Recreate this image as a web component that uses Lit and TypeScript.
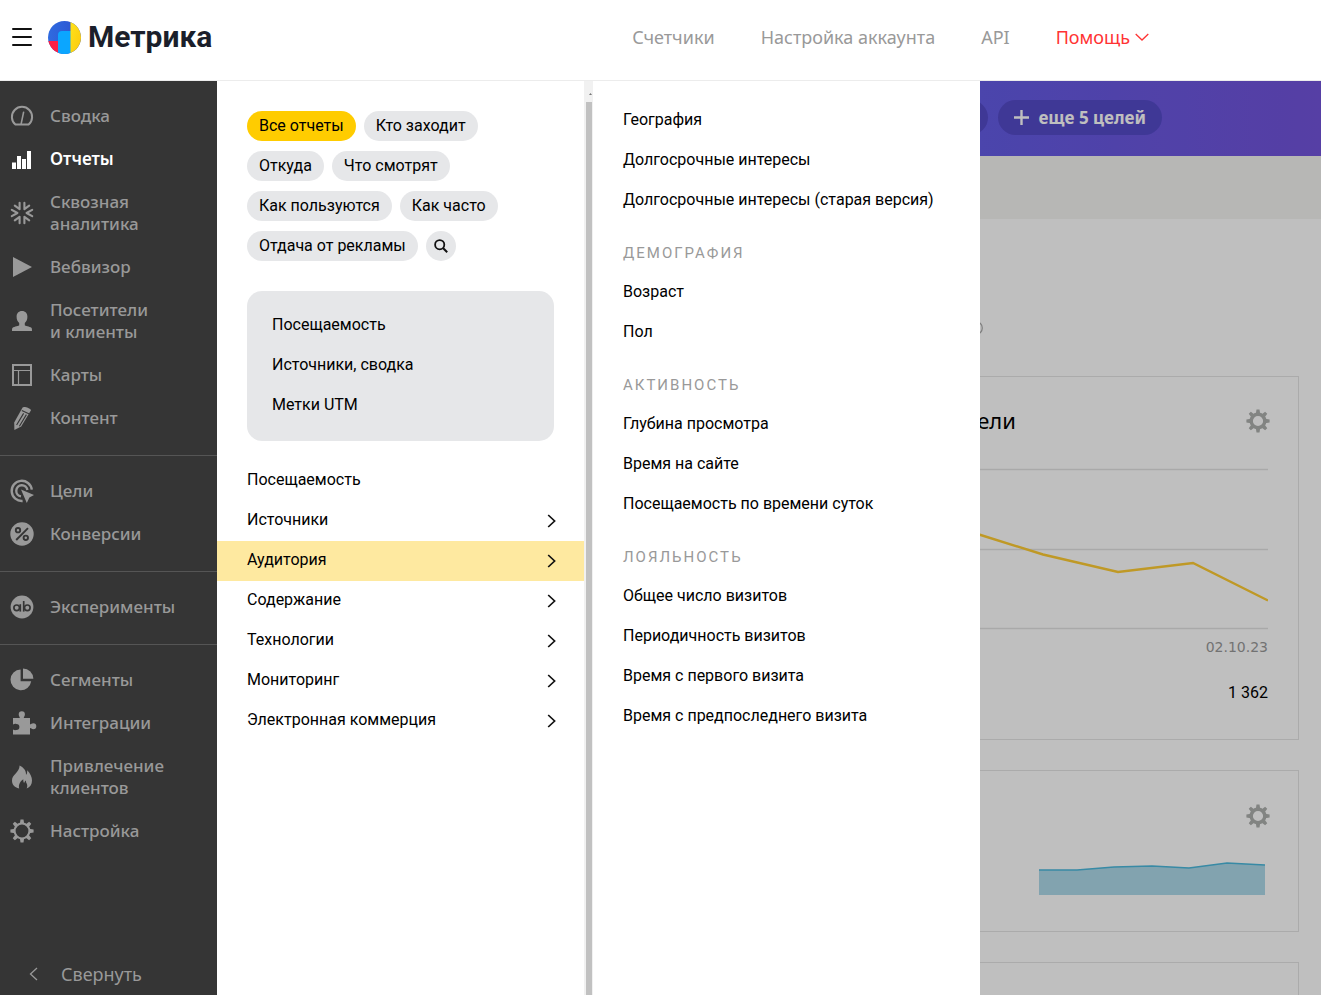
import { LitElement, html, css, svg, nothing, SVGTemplateResult } from "lit";
import { customElement, state } from "lit/decorators.js";
import { classMap } from "lit/directives/class-map.js";

type Icon = SVGTemplateResult;

const gear = (inner: number, tooth: number): Icon => svg`
  <circle cx="12" cy="12" r=${inner} fill="none" stroke="currentColor" stroke-width=${tooth} />
  ${[0, 45, 90, 135, 180, 225, 270, 315].map(
    (a) => svg`<path transform="rotate(${a} 12 12)" d="M9.800 4.900 10.500 .4h3L14.200 4.900z" fill="currentColor" />`
  )}`;

const icons: Record<string, Icon> = {
  summary: svg`<path d="M5.400 20.600A10.100 10.100 0 1 1 18.600 20.600z" fill="none" stroke="currentColor" stroke-width="2" stroke-linejoin="round" /><path d="M13.600 8.200 11.200 19.600" stroke="currentColor" stroke-width="1.600" stroke-linecap="round" />`,
  reports: svg`<path d="M2 15.500h4V22H2zM7 9h4v13H7zM12 12h4v10h-4zM17 4h4v18h-4z" fill="currentColor" />`,
  through: svg`<g fill="none" stroke="currentColor" stroke-width="2.100" stroke-linecap="round" stroke-linejoin="round">
    <path d="M1.800 8.800 7.400 12 1.800 15.200M22.200 8.800 16.600 12 22.200 15.200" />
    <path d="M9.600 1.800V8.200L4.800 4.600M14.400 1.800V8.200L19.200 4.600M9.600 22.200V15.800L4.800 19.400M14.400 22.200V15.800L19.200 19.400" />
  </g>`,
  play: svg`<path d="M3 2v20l19-10z" fill="currentColor" />`,
  person: svg`<path d="M12 2c3.400 0 5.400 2.200 5.400 5.800 0 2.700-1 4.900-2.600 6.200v2.200c0 .8 5 1.200 6.600 2.600.5.500.6 1.200.6 3.200H2c0-2 .1-2.700.6-3.200C4.200 17.400 9.200 17 9.200 16.200V14C7.600 12.700 6.600 10.500 6.600 7.800 6.600 4.200 8.600 2 12 2z" fill="currentColor" />`,
  maps: svg`<path d="M3 2h18v20H3z" fill="none" stroke="currentColor" stroke-width="2" /><path d="M3 7.500h18M8.500 7.500V22" stroke="currentColor" stroke-width="1.200" />`,
  pencil: svg`<path d="M12.600 1.600c1-1.600 7.600.6 8.400 2.600L11.200 20.600 4.400 24 4.200 16.600z" fill="currentColor" /><path d="M11.800 4.600 19.400 8M13.600 7.400 6.600 19M16.400 8.600 9.400 20.200" stroke="#353535" stroke-width="1.100" />`,
  goals: svg`<path d="M21.800 10.600A10.100 10.100 0 1 0 12.600 22M17.400 11A5.600 5.600 0 1 0 11 17.400" fill="none" stroke="currentColor" stroke-width="2.400" /><path d="M11 10.400 24 16l-4.600 2.400-2.600 5.600z" fill="currentColor" />`,
  percent: svg`<circle cx="12" cy="12" r="11.700" fill="currentColor" /><g fill="none" stroke="#353535" stroke-width="1.900"><circle cx="8" cy="8.200" r="2.200" /><circle cx="15.800" cy="15.800" r="2.200" /><path d="M18 6.200 6.200 18" /></g>`,
  ab: svg`<circle cx="12" cy="12" r="11.400" fill="currentColor" /><g fill="none" stroke="#353535" stroke-width="1.700"><circle cx="6.700" cy="12.800" r="2.800" /><path d="M10.300 9.200v7.400" /><circle cx="17.300" cy="12.800" r="2.800" /><path d="M13.700 6v10.600" /></g>`,
  segments: svg`<path d="M10.600 1.400v11.800h10.600A10.400 10.400 0 1 1 10.600 1.400z" fill="currentColor" /><path d="M13 .6A10.400 10.400 0 0 1 23.400 10.800H13z" fill="currentColor" />`,
  puzzle: svg`<path d="M3 7h6.700c.6-.8-1-1.500-1-3.600a3.100 3.100 0 0 1 6.200 0c0 2.100-1.600 2.800-1 3.600H20v6.200c.8.500 1.400-1 3.300-1a3 3 0 0 1 0 6c-1.900 0-2.500-1.500-3.300-1V23.500H3V18.400c1 .6 2 1 3.400.6a3 3 0 0 0 0-6c-1.400-.4-2.400 0-3.400.6z" fill="currentColor" />`,
  fire: svg`<path d="M9.600.6c5 2.800 6.600 5.600 6.400 9.200.9-.7 1.300-2.200 1.200-4.600 3.300 3.300 4.800 7 4.800 10.400 0 4-1.800 6.600-5.400 8 .9-1.800.9-3.400.1-5-.7-1.300-.8-1.800-.7-3-1.100.7-1.600 1.500-1.800 2.600-.9-1.300-1-2.600-.9-3.900-2.600 1.700-5.200 5.200-4.100 9.300C4.200 22.200 2 19.600 2 15.600 2 9.400 9.400 7.800 9.600.6z" fill="currentColor" />`,
  settings: svg`${gear(7.400, 2)}`,
};

interface NavItem { icon: string; label: string[]; active?: boolean }

const NAV: NavItem[][] = [
  [
    { icon: "summary", label: ["Сводка"] },
    { icon: "reports", label: ["Отчеты"], active: true },
    { icon: "through", label: ["Сквозная", "аналитика"] },
    { icon: "play", label: ["Вебвизор"] },
    { icon: "person", label: ["Посетители", "и клиенты"] },
    { icon: "maps", label: ["Карты"] },
    { icon: "pencil", label: ["Контент"] },
  ],
  [
    { icon: "goals", label: ["Цели"] },
    { icon: "percent", label: ["Конверсии"] },
  ],
  [{ icon: "ab", label: ["Эксперименты"] }],
  [
    { icon: "segments", label: ["Сегменты"] },
    { icon: "puzzle", label: ["Интеграции"] },
    { icon: "fire", label: ["Привлечение", "клиентов"] },
    { icon: "settings", label: ["Настройка"] },
  ],
];

const FILTERS = ["Все отчеты", "Кто заходит", "Откуда", "Что смотрят", "Как пользуются", "Как часто", "Отдача от рекламы"];
const FAVORITES = ["Посещаемость", "Источники, сводка", "Метки UTM"];
const CATEGORIES = ["Посещаемость", "Источники", "Аудитория", "Содержание", "Технологии", "Мониторинг", "Электронная коммерция"];

const REPORTS: { title?: string; items: string[] }[] = [
  { items: ["География", "Долгосрочные интересы", "Долгосрочные интересы (старая версия)"] },
  { title: "Демография", items: ["Возраст", "Пол"] },
  { title: "Активность", items: ["Глубина просмотра", "Время на сайте", "Посещаемость по времени суток"] },
  { title: "Лояльность", items: ["Общее число визитов", "Периодичность визитов", "Время с первого визита", "Время с предпоследнего визита"] },
];

@customElement("metrika-header")
class MetrikaHeader extends LitElement {
  static styles = css`
    :host { display: block; }
    .bar { display: flex; align-items: center; height: 74px; padding: 0 172px 6px 12px; background: #fff; border-bottom: 1px solid #ececec; }
    .burger { display: grid; gap: 6px; width: 20px; padding: 0; border: 0; background: none; }
    .burger i { height: 2px; border-radius: 1px; background: #111; }
    .logo { display: flex; align-items: center; gap: 7px; margin-left: 16px; color: #1b1f2b; font: 700 30px/40px Roboto, sans-serif; text-decoration: none; }
    .logo svg { width: 33px; height: 33px; }
    nav { display: flex; gap: 46px; margin-left: auto; }
    nav a { display: flex; align-items: center; gap: 5px; color: #999; font-size: 18px; line-height: 24px; text-decoration: none; }
    nav a.help { color: #f33; }
    nav svg { width: 14px; height: 8px; }
  `;
  render() {
    return html`
      <header class="bar">
        <button class="burger" aria-label="Меню"><i></i><i></i><i></i></button>
        <a class="logo" href="#">
          <svg viewBox="0 0 33 33" aria-hidden="true">
            <defs>
              <clipPath id="disc"><circle cx="16.500" cy="16.500" r="16.500" /></clipPath>
              <linearGradient id="sun" x1="0" y1="0" x2="1" y2="1"><stop offset="0" stop-color="#ffe21a" /><stop offset="1" stop-color="#fbc80c" /></linearGradient>
              <linearGradient id="sea" x1="0" y1="0" x2="1" y2="0"><stop offset="0" stop-color="#2f6be0" /><stop offset="1" stop-color="#2c50cf" /></linearGradient>
            </defs>
            <g clip-path="url(#disc)">
              <rect width="33" height="33" fill="url(#sea)" />
              <rect y="20" width="12" height="13" fill="#fb1f45" />
              <path d="M10 33V14a4 4 0 0 1 4-4h9v23z" fill="#0ba6ff" />
              <rect x="22.500" width="11" height="33" fill="url(#sun)" />
            </g>
          </svg>
          <span>Метрика</span>
        </a>
        <nav>
          <a href="#">Счетчики</a>
          <a href="#">Настройка аккаунта</a>
          <a href="#">API</a>
          <a href="#" class="help">Помощь
            <svg viewBox="0 0 14 8" aria-hidden="true"><path d="M.7 1 7 7l6.300-6" fill="none" stroke="currentColor" stroke-width="1.300" /></svg>
          </a>
        </nav>
      </header>`;
  }
}

@customElement("metrika-sidebar")
class MetrikaSidebar extends LitElement {
  static styles = css`
    :host { display: flex; flex-direction: column; background: #353535; }
    ul { list-style: none; margin: 0; padding: 14px 0 15px; border-bottom: 1px solid #555; }
    ul:last-of-type { border-bottom: 0; }
    a { display: flex; align-items: center; gap: 16px; padding: 10px 10px 11px; color: #999; font-size: 17px; font-weight: 500; line-height: 22px; text-decoration: none; }
    a svg { flex: none; width: 24px; height: 24px; margin: -1px 0; overflow: visible; }
    a.active { color: #fff; font-weight: 600; }
    span { display: block; }
    .collapse { display: flex; align-items: center; gap: 23px; margin-top: auto; padding: 0 29px 9px; border: 0; background: none; color: #999; font: 400 18px/24px "Noto Sans", sans-serif; }
    .collapse svg { width: 9px; height: 14px; }
  `;
  render() {
    return html`
      ${NAV.map((group) => html`<ul>${group.map((item) => html`
        <li><a href="#" class=${classMap({ active: !!item.active })}>
          <svg viewBox="0 0 24 24" aria-hidden="true">${icons[item.icon]}</svg>
          <div>${item.label.map((line) => html`<span>${line}</span>`)}</div>
        </a></li>`)}</ul>`)}
      <button class="collapse">
        <svg viewBox="0 0 9 14" aria-hidden="true"><path d="M8 1 1.500 7 8 13" fill="none" stroke="currentColor" stroke-width="1.300" /></svg>
        <span>Свернуть</span>
      </button>`;
  }
}

@customElement("reports-menu")
class ReportsMenu extends LitElement {
  @state() private filter = FILTERS[0];
  @state() private category = "Аудитория";

  static styles = css`
    :host { display: flex; background: #fff; color: #000; font: 400 16px/20px Roboto, "Noto Sans", sans-serif; }
    button { font: inherit; color: inherit; border: 0; margin: 0; cursor: pointer; }
    .left { flex: none; width: 367px; box-sizing: border-box; padding-top: 30px; }
    .filters { display: flex; flex-wrap: wrap; gap: 10px 8px; padding: 0 30px; }
    .chip { height: 30px; padding: 0 12px 1px; border-radius: 15px; background: #e6e7e9; white-space: nowrap; }
    .chip.on { background: #fc0; }
    .search { display: grid; place-items: center; width: 30px; padding: 0; }
    .search svg { width: 14px; height: 14px; }
    ul { list-style: none; margin: 0; padding: 0; }
    .favorites { margin: 30px 30px 20px; padding: 15px 25px; border-radius: 15px; background: #e6e7e9; }
    a { display: block; padding: 9px 0 11px; color: inherit; text-decoration: none; }
    .row { display: flex; justify-content: space-between; align-items: center; width: 100%; height: 40px; padding: 0 28px 0 30px; background: none; text-align: left; }
    .row span { padding-bottom: 2px; }
    .row.on { background: #fee9a0; }
    .row svg { width: 9px; height: 14px; }
    .scroll { flex: none; display: flex; flex-direction: column; width: 9px; background: #f1f1f1; }
    .arrow { height: 21px; box-sizing: border-box; padding: 12px 0 0 5px; }
    .arrow svg { display: block; width: 3px; height: 2px; }
    .thumb { flex: 1; margin: 0 1px 0 2px; background: #c1c1c1; }
    .right { flex: 1; padding: 20px 30px; }
    h3 { margin: 12px 0 0; padding: 10px 0; color: #999; font-size: 15px; font-weight: 400; line-height: 20px; letter-spacing: 2px; text-transform: uppercase; }
  `;
  render() {
    return html`
      <section class="left">
        <div class="filters">
          ${FILTERS.map((f) => html`<button class=${classMap({ chip: true, on: f === this.filter })} @click=${() => (this.filter = f)}>${f}</button>`)}
          <button class="chip search" aria-label="Поиск">
            <svg viewBox="0 0 14 14" aria-hidden="true"><circle cx="5.700" cy="5.700" r="4.600" fill="none" stroke="#111" stroke-width="1.800" /><path d="m9 9 4.200 4.200" stroke="#111" stroke-width="2" /></svg>
          </button>
        </div>
        <ul class="favorites">${FAVORITES.map((t) => html`<li><a href="#">${t}</a></li>`)}</ul>
        <ul>${CATEGORIES.map((t, i) => html`<li>
          <button class=${classMap({ row: true, on: t === this.category })} @click=${() => (this.category = t)}>
            <span>${t}</span>
            ${i ? html`<svg viewBox="0 0 9 14" aria-hidden="true"><path d="M1.200 1 7.600 7 1.200 13" fill="none" stroke="#111" stroke-width="1.700" /></svg>` : nothing}
          </button></li>`)}</ul>
      </section>
      <div class="scroll" aria-hidden="true">
        <div class="arrow"><svg viewBox="0 0 3 2"><path d="M1.500 0 3 2H0z" fill="#777" /></svg></div>
        <div class="thumb"></div>
      </div>
      <section class="right">
        ${REPORTS.map((s) => html`
          ${s.title ? html`<h3>${s.title}</h3>` : nothing}
          <ul>${s.items.map((t) => html`<li><a href="#">${t}</a></li>`)}</ul>`)}
      </section>`;
  }
}

@customElement("metrika-dashboard")
class MetrikaDashboard extends LitElement {
  static styles = css`
    :host { display: block; background: #fff; }
    .goals { display: flex; align-items: center; justify-content: flex-end; gap: 10px; height: 75px; box-sizing: border-box; padding: 0 159px 2px 0; background: linear-gradient(90deg, #4c5af0 0%, #645ce6 69%, #7354dc 100%); }
    .goal { display: flex; align-items: center; gap: 9px; height: 35px; padding: 0 16px; border: 0; border-radius: 18px; background: #554bc9; color: #fff; font: 700 17px/24px "Noto Sans", sans-serif; }
    .goal svg { width: 15px; height: 15px; }
    .empty { width: 90px; box-sizing: border-box; }
    .strip { height: 63px; background: #f5f5f2; }
    .info { display: flex; justify-content: flex-end; padding: 102px 338px 41px 0; }
    .info svg { width: 14px; height: 14px; }
    .cards { display: grid; grid-template-columns: 1fr 1fr; gap: 30px 36px; padding: 0 22px; }
    .card { grid-column: 2; border: 1px solid #e4e4e4; padding: 32px 30px; }
    .head { display: flex; justify-content: space-between; align-items: center; }
    h2 { margin: 0; font-size: 22px; font-weight: 400; line-height: 22px; padding-bottom: 2px; }
    .gear { display: block; width: 24px; height: 24px; padding: 0; border: 0; background: none; color: #aeb0ae; margin-right: -2px; }
    .gear svg { display: block; width: 24px; height: 24px; }
    .line { display: block; width: 100%; height: 162px; margin-top: 35px; }
    .date { margin-top: 7px; color: #999; font: 14px/20px "DejaVu Sans", sans-serif; text-align: right; }
    .value { margin: 26px 0 4px; font: 400 16px/20px Roboto, sans-serif; text-align: right; }
    .end { justify-content: flex-end; }
    .small { padding-top: 33px; }
    .area { display: block; width: 226px; height: 35px; margin: 32px 3px 4px auto; }
  `;
  private gear() {
    return html`<button class="gear" aria-label="Настроить"><svg viewBox="0 0 24 24">${gear(6.800, 3.400)}</svg></button>`;
  }
  render() {
    return html`
      <div class="goals">
        <button class="goal empty" aria-label="Цель"></button>
        <button class="goal">
          <svg viewBox="0 0 15 15" aria-hidden="true"><path d="M7.500 0v15M0 7.500h15" stroke="currentColor" stroke-width="2.400" /></svg>
          еще 5 целей
        </button>
      </div>
      <div class="strip"></div>
      <div class="info"><svg viewBox="0 0 14 14" aria-hidden="true"><circle cx="7" cy="7" r="6.300" fill="none" stroke="#aaa" stroke-width="1.200" /></svg></div>
      <div class="cards">
        <article class="card">
          <div class="head"><h2>Новые посетители</h2>${this.gear()}</div>
          <svg class="line" viewBox="0 0 450 162" preserveAspectRatio="none" aria-hidden="true">
            <path d="M0 1.500h450M0 81.500h450M0 160.500h450" stroke="#e2e2e2" stroke-width="1.500" vector-effect="non-scaling-stroke" />
            <path d="M0 40 75 30 150 63 225 86.500 300 104 375 95 450 132.500" fill="none" stroke="#fc3" stroke-width="2.400" vector-effect="non-scaling-stroke" />
          </svg>
          <div class="date">02.10.23</div>
          <div class="value">1 362</div>
        </article>
        <article class="card small">
          <div class="head end">${this.gear()}</div>
          <svg class="area" viewBox="0 0 226 35" preserveAspectRatio="none" aria-hidden="true">
            <path d="M0 10H38L75 7 113 6 150 8 188 3 226 5V35H0z" fill="#aedaea" />
            <path d="M0 10H38L75 7 113 6 150 8 188 3 226 5" fill="none" stroke="#4bb8dc" stroke-width="1.500" vector-effect="non-scaling-stroke" />
          </svg>
        </article>
        <article class="card small"></article>
      </div>`;
  }
}

@customElement("app-root")
class AppRoot extends LitElement {
  static styles = css`
    :host { display: flex; flex-direction: column; height: 100vh; overflow: hidden; font-family: "Noto Sans", sans-serif; }
    .body { position: relative; flex: 1; min-height: 0; display: grid; grid-template-columns: 217px 1fr; }
    metrika-dashboard { min-height: 0; overflow: hidden; }
    .scrim { position: absolute; inset: 0 0 0 217px; background: rgba(0, 0, 0, 0.25); }
    reports-menu { position: absolute; top: 0; bottom: 0; left: 217px; width: 763px; }
  `;
  render() {
    return html`
      <metrika-header></metrika-header>
      <div class="body">
        <metrika-sidebar></metrika-sidebar>
        <metrika-dashboard></metrika-dashboard>
        <div class="scrim"></div>
        <reports-menu></reports-menu>
      </div>`;
  }
}
